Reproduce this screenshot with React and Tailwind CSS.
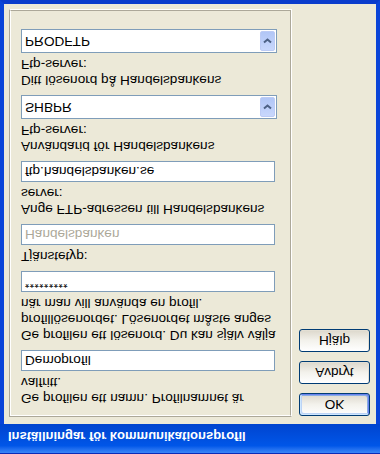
import React from 'react';

// Field label: one or more fixed lines of text
const Label = ({ lines, className = '' }) => (
  <div className={`leading-[16px] whitespace-nowrap ${className}`}>
    {lines.map((l, i) => (
      <div key={i}>{l}</div>
    ))}
  </div>
);

const TextBox = ({ value, disabled, password }) => (
  <div className="mt-[3px] w-[254px] h-[21px] border border-[#7f9db9] bg-white px-[3px] flex items-center">
    {password ? (
      <span className="text-[11px] leading-none tracking-[0.5px] translate-y-[-2px]">{value}</span>
    ) : (
      <span className={`leading-none ${disabled ? 'text-[#aca899]' : 'text-black'}`}>{value}</span>
    )}
  </div>
);

const Combo = ({ value }) => (
  <div className="mt-[3px] w-[256px] h-[24px] border border-[#7f9db9] bg-white p-[1px] flex items-stretch">
    <div className="flex-1 flex items-center pl-[2px] leading-none">{value}</div>
    <div className="w-[15px] rounded-[2px] border border-[#bccbf5] bg-linear-to-b from-[#c8d7fc] to-[#b1c6f6] flex items-center justify-center">
      <svg width="9" height="6" viewBox="0 0 9 6">
        <polyline points="1,1.5 4.5,4.5 8,1.5" fill="none" stroke="#4d6185" strokeWidth="2" />
      </svg>
    </div>
  </div>
);

const XpButton = ({ label, isDefault }) => (
  <button
    className={`w-[71px] h-[23px] rounded-[3px] border border-[#003c74] bg-linear-to-b from-white via-[#f3f2ec] to-[#dcd7cb] leading-none text-black flex items-center justify-center ${
      isDefault
        ? 'shadow-[inset_1px_1px_0_#cee7ff,inset_-1px_-1px_0_#6982ee,inset_2px_2px_0_#bcd4f6,inset_-2px_-2px_0_#89ade4]'
        : 'shadow-[inset_-1px_-1px_0_#e3dfd4]'
    }`}
  >
    {label}
  </button>
);

export default function App() {
  return (
    <div className="-scale-y-100 w-[380px] h-[454px] flex flex-col font-['Liberation_Sans',Arial,sans-serif] text-[13.6px] text-black">
      {/* Title bar */}
      <div className="h-[30px] shrink-0 border-t border-[#0a2cb8] bg-linear-to-b from-[#3a86f7] via-[#0056e8] via-25% to-[#0044cf] flex items-center pl-[8px] pt-[3px]">
        <span className="font-bold text-[13px] text-white leading-none">Inställningar för kommunikationsprofil</span>
      </div>

      {/* Body */}
      <div className="flex-1 flex bg-[#ece9d8] border-x-4 border-b-4 border-x-[#0a44d8] border-b-[#0a3ccc]">
        <div className="ml-[5px] mt-[7px] w-[283px] h-[408px] border border-t-[#aca899] border-l-[#aca899] border-r-white border-b-white">
          <div className="h-full border border-t-white border-l-white border-r-[#aca899] border-b-[#aca899] pl-[10px] pt-[9px]">
            <Label lines={['Ge profilen ett namn. Profilnamnet är', 'valfritt.']} />
            <div className="mt-[1px]">
              <TextBox value="Demoprofil" />
            </div>

            <Label
              className="mt-[7px]"
              lines={[
                'Ge profilen ett lösenord. Du kan själv välja',
                'profillösenordet. Lösenordet måste anges',
                'när man vill använda en profil.',
              ]}
            />
            <TextBox value="*********" password />

            <Label className="mt-[7px]" lines={['Tjänstetyp:']} />
            <TextBox value="Handelsbanken" disabled />

            <Label className="mt-[7px]" lines={['Ange FTP-adressen till Handelsbankens', 'server:']} />
            <TextBox value="ftp.handelsbanken.se" />

            <Label className="mt-[7px]" lines={['Användarid för Handelsbankens', 'Ftp-server:']} />
            <Combo value="SHBPR" />

            <Label className="mt-[7px]" lines={['Ditt lösenord på Handelsbankens', 'Ftp-server:']} />
            <Combo value="PRODFTP" />
          </div>
        </div>

        {/* Dialog buttons */}
        <div className="ml-[7px] mt-[8px] flex flex-col gap-[9px]">
          <XpButton label="OK" isDefault />
          <XpButton label="Avbryt" />
          <XpButton label="Hjälp" />
        </div>
      </div>
    </div>
  );
}
